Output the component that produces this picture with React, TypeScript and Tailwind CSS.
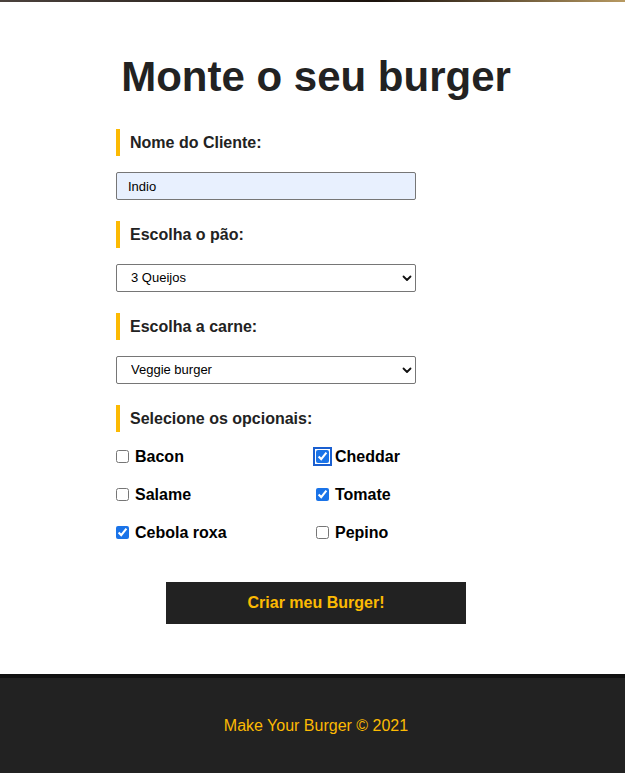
import React from "react";

const font = { fontFamily: '"Liberation Sans", Arial, Helvetica, sans-serif' };

function Label({ children }: { children: React.ReactNode }) {
  return (
    <div className="border-l-4 border-[#fcba03] pl-[10px] h-[27px] flex items-center mb-[16px] text-[16px] font-bold text-[#222]">
      {children}
    </div>
  );
}

function Chevron() {
  return (
    <svg className="absolute right-[4px] top-1/2 -translate-y-1/2 pointer-events-none" width="10" height="8" viewBox="0 0 10 8">
      <path d="M1.5 2.5 L5 6 L8.5 2.5" fill="none" stroke="#111" strokeWidth="1.8" strokeLinecap="round" strokeLinejoin="round" />
    </svg>
  );
}

function Check({ label, checked, focus }: { label: string; checked?: boolean; focus?: boolean }) {
  return (
    <label className="flex items-center h-[38px]">
      <input
        type="checkbox"
        defaultChecked={checked}
        className={
          "m-0 -mt-[2px] w-[13px] h-[13px] accent-[#1a73e8] " +
          (focus ? "outline-2 outline-[#1a5fd0] outline-offset-[1px] rounded-[2px]" : "")
        }
      />
      <span className="ml-[6px] text-[16px] font-bold text-black">{label}</span>
    </label>
  );
}

export default function App() {
  return (
    <div style={font} className="min-h-[773px] bg-white flex flex-col">
      <div className="h-[2px] bg-gradient-to-r from-[#4b423d] via-[#1a120c] via-60% to-[#b89a62]" />
      <main className="pl-[7px] flex flex-col items-center">
        <h1 className="mt-[50px] text-[42px] leading-[50px] font-bold text-[#222]">Monte o seu burger</h1>
        <form className="w-[400px] mt-[27px]">
          <Label>Nome do Cliente:</Label>
          <input
            defaultValue="Indio"
            className="block w-[300px] h-[28px] border border-[#767676] rounded-[2px] bg-[#e8f0fe] pl-[11px] text-[13px] text-black mb-[21px]"
          />
          <Label>Escolha o pão:</Label>
          <div className="relative w-[300px] mb-[21px]">
            <select className="appearance-none block w-[300px] h-[28px] border border-[#767676] rounded-[2px] bg-white pl-[14px] text-[13px] text-black">
              <option>3 Queijos</option>
            </select>
            <Chevron />
          </div>
          <Label>Escolha a carne:</Label>
          <div className="relative w-[300px] mb-[21px]">
            <select className="appearance-none block w-[300px] h-[28px] border border-[#767676] rounded-[2px] bg-white pl-[14px] text-[13px] text-black">
              <option>Veggie burger</option>
            </select>
            <Chevron />
          </div>
          <Label>Selecione os opcionais:</Label>
          <div className="grid grid-cols-2 -mt-[10px]">
            <Check label="Bacon" />
            <Check label="Cheddar" checked focus />
            <Check label="Salame" />
            <Check label="Tomate" checked />
            <Check label="Cebola roxa" checked />
            <Check label="Pepino" />
          </div>
          <div className="flex justify-center mt-[30px]">
            <button
              type="button"
              className="w-[300px] h-[42px] bg-[#222] text-[#fcba03] text-[16px] font-bold"
            >
              Criar meu Burger!
            </button>
          </div>
        </form>
      </main>
      <footer className="mt-[50px] flex-1 border-t-4 border-[#111] bg-[#222] pl-[7px] flex items-center justify-center">
        <p className="text-[16px] text-[#fcba03]">Make Your Burger © 2021</p>
      </footer>
    </div>
  );
}
